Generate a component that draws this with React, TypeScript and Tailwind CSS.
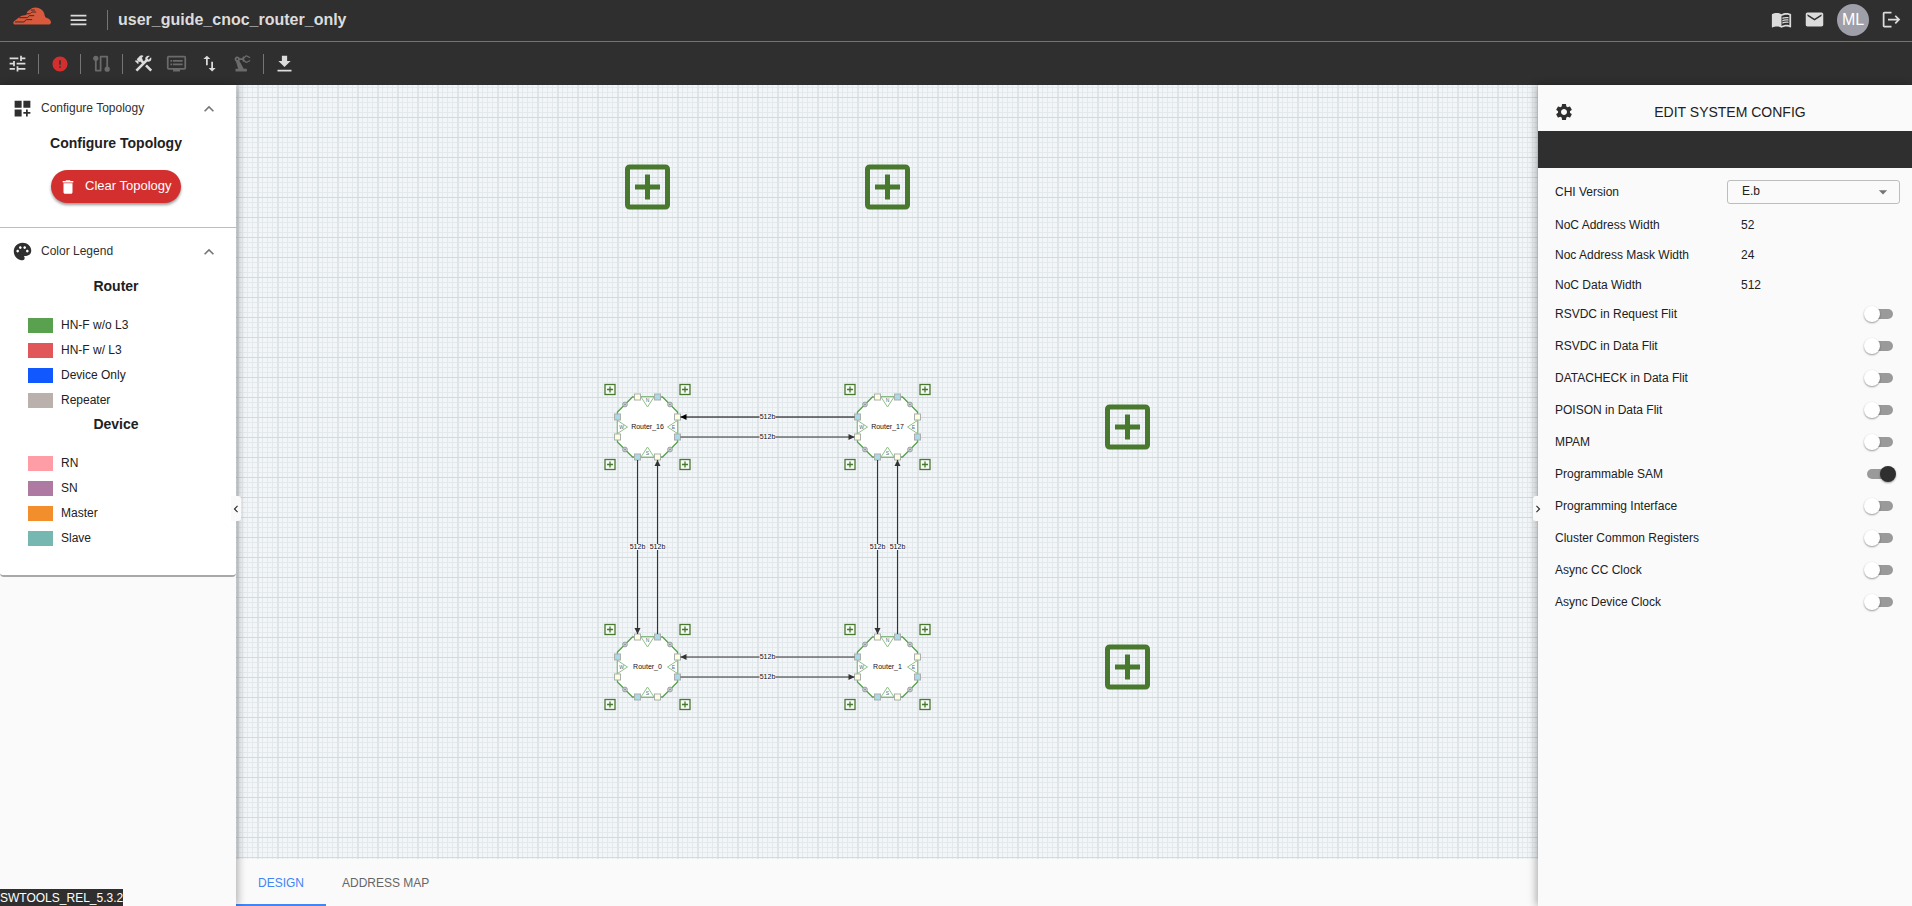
import React, { useState } from "react";
import {
  MdTune,
  MdError,
  MdConstruction,
  MdImportExport,
  MdPrecisionManufacturing,
  MdMenu,
  MdMenuBook,
  MdEmail,
  MdLogout,
  MdDashboardCustomize,
  MdPalette,
  MdKeyboardArrowUp,
  MdChevronLeft,
  MdChevronRight,
  MdDelete,
  MdSettings,
  MdArrowDropDown,
} from "react-icons/md";

function CloudLogo() {
  return (
    <svg viewBox="0 0 115 54" className="h-[18px] w-[38px]" aria-hidden="true">
      <path
        d="M6 53C0 53-1 44 5 41L20 30C26 25 34 25 41 23C42 18 42 12 50 9C55 3 61 1 68 1C84 1 95 12 96 26C97 30 99 32 103 33C110 35 115 40 115 46C115 51 111 53 107 53Z"
        fill="#d8593b"
      />
      <path
        d="M6 45H33C37 45 36 38 41 38H58M19 32H42C47 32 46 26 51 26H64M40 20H50C55 20 54 15 59 15H70M54 9H66"
        fill="none"
        stroke="#3a302d"
        strokeWidth="3"
      />
    </svg>
  );
}

function DisplayIcon() {
  return (
    <svg viewBox="0 0 24 24" className="size-[21px]" fill="currentColor" aria-hidden="true">
      <path d="M21 3H3a2 2 0 0 0-2 2v12a2 2 0 0 0 2 2h5v2h8v-2h5a2 2 0 0 0 2-2V5a2 2 0 0 0-2-2zm0 14H3V5h18zM19 8H8v2h11zm0 4H8v2h11zM7 8H5v2h2zm0 4H5v2h2z" />
    </svg>
  );
}

function RouteIcon() {
  return (
    <svg viewBox="0 0 24 24" className="size-[21px]" fill="none" aria-hidden="true">
      <path d="M5.5 6V20H11V4H18.5V18" stroke="currentColor" strokeWidth="2" strokeLinejoin="round" />
      <circle cx="5.5" cy="6" r="3" fill="currentColor" />
      <circle cx="18.5" cy="18.5" r="3" fill="currentColor" />
    </svg>
  );
}

function DownloadIcon() {
  return (
    <svg viewBox="0 0 24 24" className="size-[21px]" fill="currentColor" aria-hidden="true">
      <path d="M19 9h-4V3H9v6H5l7 7zM4 19v2h16v-2z" />
    </svg>
  );
}

function Divider() {
  return <span className="h-5 w-px bg-[#757575]" />;
}

type IconButtonProps = { label: string; dim?: boolean; children: React.ReactNode };

function IconButton({ label, dim, children }: IconButtonProps) {
  return (
    <button
      type="button"
      aria-label={label}
      disabled={dim}
      className={`flex size-[21px] items-center justify-center ${dim ? "text-[#6b6b6b]" : "text-[#dcdcdc]"}`}
    >
      {children}
    </button>
  );
}

function Header() {
  return (
    <header className="shrink-0 bg-[#2f2f2f]">
      <div className="flex h-[42px] items-center justify-between border-b border-[#757575] pr-[10px] pb-[2px] pl-[13px]">
        <div className="flex items-center">
          <a href="#home" aria-label="Home" className="mb-2">
            <CloudLogo />
          </a>
          <div className="ml-[17px] flex items-center gap-[18px]">
            <IconButton label="Menu">
              <MdMenu size={22} />
            </IconButton>
            <Divider />
          </div>
          <h1 className="ml-[10px] text-base font-bold text-[#dcdcdc]">user_guide_cnoc_router_only</h1>
        </div>
        <div className="flex items-center gap-3">
          <IconButton label="Documentation">
            <MdMenuBook size={21} />
          </IconButton>
          <IconButton label="Messages">
            <MdEmail size={21} />
          </IconButton>
          <button type="button" className="flex size-8 items-center justify-center rounded-full bg-[#9e9fa8] text-base text-white">
            ML
          </button>
          <IconButton label="Log out">
            <MdLogout size={21} />
          </IconButton>
        </div>
      </div>
      <div className="flex h-[43px] items-center gap-[10px] pl-[7px]">
        <IconButton label="Preferences">
          <MdTune size={21} />
        </IconButton>
        <Divider />
        <button type="button" aria-label="Errors" className="flex size-[21px] items-center justify-center text-[#d32f2f]">
          <MdError size={18} />
        </button>
        <Divider />
        <IconButton label="Route" dim>
          <RouteIcon />
        </IconButton>
        <Divider />
        <div className="flex gap-3">
          <IconButton label="Build">
            <MdConstruction size={21} />
          </IconButton>
          <IconButton label="Console" dim>
            <DisplayIcon />
          </IconButton>
          <IconButton label="Import and export">
            <MdImportExport size={21} />
          </IconButton>
          <IconButton label="Generate" dim>
            <MdPrecisionManufacturing size={21} />
          </IconButton>
        </div>
        <Divider />
        <IconButton label="Download">
          <DownloadIcon />
        </IconButton>
      </div>
    </header>
  );
}

function SectionHeader({ icon, title }: { icon: React.ReactNode; title: string }) {
  return (
    <button type="button" aria-expanded="true" className="flex h-[46px] w-full items-center pt-px pr-[17px] pl-3 text-[#2f2f2f]">
      {icon}
      <span className="ml-2 flex-1 pb-[2px] text-left text-xs text-[#2f2f2f]">{title}</span>
      <MdKeyboardArrowUp size={20} className="text-[#757575]" />
    </button>
  );
}

function Legend({ items }: { items: { color: string; name: string }[] }) {
  return (
    <ul className="mt-[17px] pl-7">
      {items.map((item) => (
        <li key={item.name} className="flex h-[25px] items-center gap-2">
          <span className={`h-[15px] w-[25px] ${item.color}`} />
          <span className="pb-[2px] text-xs">{item.name}</span>
        </li>
      ))}
    </ul>
  );
}

const routerColors = [
  { color: "bg-[#59a14f]", name: "HN-F w/o L3" },
  { color: "bg-[#e15759]", name: "HN-F w/ L3" },
  { color: "bg-[#1158ff]", name: "Device Only" },
  { color: "bg-[#bab0ac]", name: "Repeater" },
];

const deviceColors = [
  { color: "bg-[#ff9da7]", name: "RN" },
  { color: "bg-[#af7aa1]", name: "SN" },
  { color: "bg-[#f28e2b]", name: "Master" },
  { color: "bg-[#76b7b2]", name: "Slave" },
];

function Sidebar() {
  return (
    <aside className="relative z-10 flex w-[236px] shrink-0 flex-col justify-between bg-[#fafafa] text-[#212121] shadow-[2px_0_8px_rgba(0,0,0,0.3)]">
      <div className="rounded-b-[4px] border-b-2 border-[#a8a8a8] bg-white">
        <section className="border-b border-[#bdbdbd] pb-6">
          <SectionHeader icon={<MdDashboardCustomize size={21} />} title="Configure Topology" />
          <h2 className="pt-[2px] pr-1 text-center text-sm font-bold">Configure Topology</h2>
          <div className="mt-[17px] flex justify-center pr-1">
            <button
              type="button"
              className="flex h-[33px] w-[130px] items-center gap-2 rounded-full bg-[#d32f2f] pl-2 text-[13px] font-medium text-white shadow-[0_2px_3px_rgba(0,0,0,0.4)]"
            >
              <MdDelete size={18} />
              <span className="pb-[2px]">Clear Topology</span>
            </button>
          </div>
        </section>
        <section className="pb-6">
          <SectionHeader icon={<MdPalette size={21} />} title="Color Legend" />
          <h2 className="pt-[2px] pr-1 text-center text-sm font-bold">Router</h2>
          <Legend items={routerColors} />
          <h2 className="pt-px pr-1 text-center text-sm font-bold">Device</h2>
          <Legend items={deviceColors} />
        </section>
      </div>
      <p className="h-[17px] w-[123px] overflow-hidden bg-[#2f2f2f] text-xs leading-[18px] whitespace-nowrap text-white">
        SWTOOLS_REL_5.3.2
      </p>
      <button
        type="button"
        aria-label="Collapse left panel"
        className="absolute top-[411px] -right-[5px] flex h-[25px] w-[10px] items-center justify-center rounded-r-[3px] bg-[#fafafa] text-[#2f2f2f]"
      >
        <MdChevronLeft size={14} className="shrink-0" />
      </button>
    </aside>
  );
}

const yellow = "#fffde0";
const blue = "#add8e6";

const ports: [number, number, string][] = [
  [-10, -30, yellow],
  [10, -30, blue],
  [30, -10, yellow],
  [30, 10, blue],
  [10, 30, yellow],
  [-10, 30, blue],
  [-30, 10, yellow],
  [-30, -10, blue],
];

const sides: [string, string, number, number][] = [
  ["N", "-6.5,-30 6.5,-30 0,-20", 0, -25],
  ["S", "-6.5,30 6.5,30 0,20", 0, 28],
  ["W", "-30,-6.5 -30,6.5 -20,0", -26, 2],
  ["E", "30,-6.5 30,6.5 20,0", 26, 2],
];

const corners: [number, number][] = [
  [-22.5, -22.5],
  [22.5, -22.5],
  [-22.5, 22.5],
  [22.5, 22.5],
];

function SmallPlus({ x, y }: { x: number; y: number }) {
  return (
    <g transform={`translate(${x} ${y})`} stroke="#49792f" fill="none">
      <rect x="-5" y="-5" width="10" height="10" strokeWidth="1.3" fill="#f5f9f5" />
      <path d="M-3 0H3M0-3V3" strokeWidth="1.3" />
    </g>
  );
}

function BigPlus({ x, y }: { x: number; y: number }) {
  return (
    <g transform={`translate(${x} ${y})`} stroke="#49792f" fill="none" strokeWidth="5">
      <rect x="-20" y="-20" width="40" height="40" rx="2" />
      <path d="M-12.5 0H12.5M0-12.5V12.5" />
    </g>
  );
}

function RouterNode({ x, y, name }: { x: number; y: number; name: string }) {
  return (
    <g transform={`translate(${x} ${y})`}>
      {[-37.5, 37.5].map((px) => [-37.5, 37.5].map((py) => <SmallPlus key={`${px}${py}`} x={px} y={py} />))}
      <path d="M-15-30H15L30-15V15L15 30H-15L-30 15V-15Z" fill="#fff" stroke="#59a14f" strokeWidth="1.4" />
      {sides.map(([letter, points, tx, ty]) => (
        <g key={letter}>
          <polygon points={points} fill="#fff" stroke="#8cc187" strokeWidth="1" />
          <text x={tx} y={ty} textAnchor="middle" fontSize="5" fill="#3c6f74">
            {letter}
          </text>
        </g>
      ))}
      {corners.map(([cx, cy]) => (
        <g key={`${cx}${cy}`}>
          <circle cx={cx} cy={cy} r="2.4" fill="#c9cfd0" stroke="#8d9694" strokeWidth="0.8" />
          <circle cx={cx} cy={cy} r="0.8" fill="#7f8b92" />
        </g>
      ))}
      {ports.map(([px, py, fill]) => (
        <rect key={`${px}${py}`} x={px - 3} y={py - 3} width="6" height="6" fill={fill} stroke="#a9b0ae" strokeWidth="1" />
      ))}
      <text y="2" textAnchor="middle" fontSize="7" fill="#111">
        {name}
      </text>
    </g>
  );
}

type LinkProps = { x1: number; y1: number; x2: number; y2: number; dark?: boolean };

function Link({ x1, y1, x2, y2, dark }: LinkProps) {
  const mx = (x1 + x2) / 2;
  const my = (y1 + y2) / 2;
  const angle = (Math.atan2(y2 - y1, x2 - x1) * 180) / Math.PI;
  const color = dark ? "#000" : "#333";
  return (
    <g>
      <line x1={x1} y1={y1} x2={x2} y2={y2} stroke={color} strokeWidth="1.1" />
      <path d="M0 0L-6-3V3Z" transform={`translate(${x2} ${y2}) rotate(${angle})`} fill={color} />
      <rect x={mx - 8} y={my - 3} width="16" height="6" fill="#f7fafb" />
      <text x={mx} y={my + 2} textAnchor="middle" fontSize="7" fill="#111">
        512b
      </text>
    </g>
  );
}

const left = 411.5;
const right = 651.5;
const top = 342;
const bottom = 582;

function Canvas() {
  return (
    <svg className="min-h-0 w-full flex-1 bg-[#f2f6f9]" role="img" aria-label="Router topology">
      <defs>
        <pattern id="grid" x="1" y="12" width="20" height="20" patternUnits="userSpaceOnUse">
          <path d="M5.5 0V20M10.5 0V20M15.5 0V20M0 5.5H20M0 10.5H20M0 15.5H20" stroke="#e4e9ec" />
          <path d="M1 0V20" stroke="#dfe4e6" strokeWidth="2" />
          <path d="M0 0.5H20" stroke="#d4d9db" />
        </pattern>
      </defs>
      <rect width="100%" height="100%" fill="url(#grid)" />
      <BigPlus x={left} y={102} />
      <BigPlus x={right} y={102} />
      <BigPlus x={891.5} y={342} />
      <BigPlus x={891.5} y={582} />
      <RouterNode x={left} y={top} name="Router_16" />
      <RouterNode x={right} y={top} name="Router_17" />
      <RouterNode x={left} y={bottom} name="Router_0" />
      <RouterNode x={right} y={bottom} name="Router_1" />
      <Link x1={right - 33} y1={top - 10} x2={left + 33} y2={top - 10} dark />
      <Link x1={left + 33} y1={top + 10} x2={right - 33} y2={top + 10} />
      <Link x1={right - 33} y1={bottom - 10} x2={left + 33} y2={bottom - 10} />
      <Link x1={left + 33} y1={bottom + 10} x2={right - 33} y2={bottom + 10} />
      <Link x1={left - 10} y1={top + 33} x2={left - 10} y2={bottom - 33} />
      <Link x1={left + 10} y1={bottom - 33} x2={left + 10} y2={top + 33} />
      <Link x1={right - 10} y1={top + 33} x2={right - 10} y2={bottom - 33} />
      <Link x1={right + 10} y1={bottom - 33} x2={right + 10} y2={top + 33} />
    </svg>
  );
}

const switches = [
  "RSVDC in Request Flit",
  "RSVDC in Data Flit",
  "DATACHECK in Data Flit",
  "POISON in Data Flit",
  "MPAM",
  "Programmable SAM",
  "Programming Interface",
  "Cluster Common Registers",
  "Async CC Clock",
  "Async Device Clock",
];

const widths = [
  { id: "address-width", label: "NoC Address Width", value: "52" },
  { id: "mask-width", label: "Noc Address Mask Width", value: "24" },
  { id: "data-width", label: "NoC Data Width", value: "512" },
];

function ConfigPanel() {
  const [on, setOn] = useState<string[]>(["Programmable SAM"]);
  const toggle = (name: string) =>
    setOn(on.includes(name) ? on.filter((item) => item !== name) : [...on, name]);
  return (
    <aside className="relative z-10 w-[374px] shrink-0 bg-[#fafafa] text-xs text-[#212121] shadow-[-2px_0_8px_rgba(0,0,0,0.3)]">
      <div className="flex h-[46px] items-center pt-2 pl-4">
        <MdSettings size={20} className="text-[#2f2f2f]" />
        <h2 className="flex-1 pr-[26px] text-center text-sm">EDIT SYSTEM CONFIG</h2>
      </div>
      <div className="h-[37px] bg-[#2f2f2f]" />
      <form className="pr-3 pl-[17px]">
        <div className="flex h-[42px] items-center pt-[6px]">
          <label htmlFor="chi" className="w-[172px]">
            CHI Version
          </label>
          <div className="relative flex-1">
            <select
              id="chi"
              defaultValue="E.b"
              className="block h-6 w-full appearance-none rounded-[3px] border border-[#bdbdbd] bg-transparent pb-[2px] pl-[14px] text-xs"
            >
              <option>E.b</option>
            </select>
            <MdArrowDropDown size={20} className="pointer-events-none absolute top-[2px] right-[7px] text-[#757575]" />
          </div>
        </div>
        {widths.map((field) => (
          <div key={field.id} className="flex h-[30px] items-center">
            <label htmlFor={field.id} className="w-[186px]">
              {field.label}
            </label>
            <input id={field.id} defaultValue={field.value} className="w-20 bg-transparent" />
          </div>
        ))}
        {switches.map((name) => (
          <label key={name} className="flex h-8 items-center justify-between pr-[7px] pb-1">
            {name}
            <input
              type="checkbox"
              role="switch"
              checked={on.includes(name)}
              onChange={() => toggle(name)}
              className="relative h-[10px] w-[26px] appearance-none rounded-full bg-[#9a9a9a] before:absolute before:-top-[3px] before:-left-[3px] before:size-4 before:rounded-full before:bg-white before:shadow-[0_1px_2px_rgba(0,0,0,0.4)] checked:before:left-[13px] checked:before:bg-[#2f2f2f]"
            />
          </label>
        ))}
      </form>
      <button
        type="button"
        aria-label="Collapse right panel"
        className="absolute top-[411px] -left-[5px] flex h-[25px] w-[10px] items-center justify-center rounded-l-[3px] bg-[#fafafa] text-[#2f2f2f]"
      >
        <MdChevronRight size={14} className="shrink-0" />
      </button>
    </aside>
  );
}

export default function App() {
  return (
    <div className="flex h-screen flex-col overflow-hidden font-['Liberation_Sans',Arial,sans-serif]">
      <Header />
      <div className="flex min-h-0 flex-1">
        <Sidebar />
        <main className="flex min-w-0 flex-1 flex-col">
          <Canvas />
          <div role="tablist" className="flex h-[47px] shrink-0 bg-[#fafafa] text-xs">
            <button type="button" role="tab" aria-selected="true" className="w-[90px] border-b-2 border-[#4285f4] pt-[2px] text-[#4285f4]">
              DESIGN
            </button>
            <button type="button" role="tab" aria-selected="false" className="border-b-2 border-transparent px-4 pt-[2px] text-[#666]">
              ADDRESS MAP
            </button>
          </div>
        </main>
        <ConfigPanel />
      </div>
    </div>
  );
}
